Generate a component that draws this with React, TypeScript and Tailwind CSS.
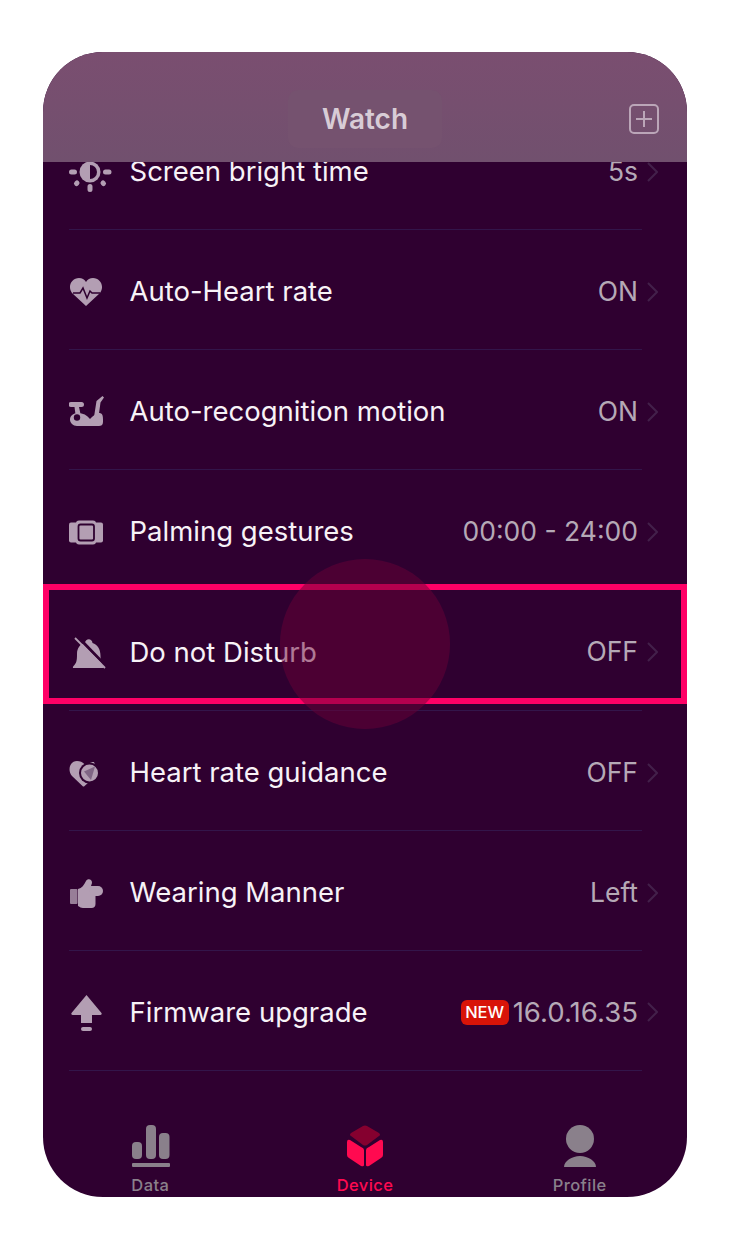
import React from 'react';

const ICON = '#b39eb3';
const BG = '#2f0030';

const SunIcon = () => (
  <svg viewBox="0 0 44 44" className="w-[44px] h-[44px]" fill={ICON}>
    <circle cx="21" cy="22" r="10.500" />
    <path d="M21 15a7 7 0 0 1 0 14z" fill={BG} />
    <g stroke={ICON} strokeWidth="5" strokeLinecap="round">
      <path d="M2.500 22h3M36.500 22h3.500M21 36.500v3M8 33l-.500.500M34 33l.500.500" />
    </g>
  </svg>
);

const HeartIcon = () => (
  <svg viewBox="0 0 44 44" className="w-[44px] h-[44px]" fill={ICON}>
    <path d="M17 36 3 23C-2 16 3 8 10 8c3 0 5.500 1.500 7 4 1.500-2.500 4-4 7-4 7 0 12 8 7 15z" />
    <path d="M4 23h7l3-5 4 10 3-7 2 2h8" fill="none" stroke={BG} strokeWidth="1.500" />
  </svg>
);

const BikeIcon = () => (
  <svg viewBox="0 0 44 44" className="w-[44px] h-[44px]" fill={ICON}>
    <path d="M2 12h10.500a2.500 2.500 0 0 1 0 5H10l1.500 7-5 .500-1-7.500H2a2.500 2.500 0 0 1 0-5z" />
    <path d="M25 27l2.500-16 6-5 1.500 1.500-3.500 5-2 14.500z" />
    <path d="M9 23c5 0 9 2 12 6 3-3 6-6 9-6 3 0 4 2 4 6v3c0 3-2 4-4 4H8c-4 0-7-3-7-6.500S4 23 9 23z" />
    <circle cx="8" cy="27.500" r="3.200" fill={BG} />
  </svg>
);

const PalmIcon = () => (
  <svg viewBox="0 0 44 44" className="w-[44px] h-[44px]" fill={ICON}>
    <rect x="0" y="12.500" width="34" height="20" rx="2" />
    <rect x="7" y="10.500" width="20" height="24" rx="3" />
    <rect x="9.500" y="14.500" width="15.500" height="16" rx="2" fill="none" stroke={BG} strokeWidth="1.800" />
  </svg>
);

const BellIcon = () => (
  <svg viewBox="0 0 44 44" className="w-[44px] h-[44px]" fill={ICON}>
    <path d="M4 38q-.500-1 .500-2c3-3 3.500-5 3.500-12 0-6 3-10 8-11 .500-5 7-5 7.500 0 5 1.500 8 6 8 13 0 5 1 8 2.500 10q1 1 .500 2z" />
    <path d="M8 6l30 31" stroke={BG} strokeWidth="3" />
    <path d="M6 8l30 30" stroke={ICON} strokeWidth="1.800" />
  </svg>
);

const GuideIcon = () => (
  <svg viewBox="0 0 44 44" className="w-[44px] h-[44px]" fill={ICON}>
    <path d="M14 35.500 3 25C-2 19 1 10 8 10c4 0 7 2 9 5 3-3 5-4 8-4l4 12-14 12.500z" />
    <circle cx="20.500" cy="22" r="10.500" fill={BG} />
    <circle cx="20.500" cy="22" r="8.500" />
    <path d="M26 15.500 15 20.500l7 8.500z" fill="#806585" />
  </svg>
);

const HandIcon = () => (
  <svg viewBox="0 0 44 44" className="w-[44px] h-[44px]" fill={ICON}>
    <rect x="1" y="18" width="7.500" height="15" rx="1" opacity="0.8" />
    <path d="M9 18c4-1 6-4 8-8 1.500-3 6.500-2 6 2l-1 3h7v10h-2.500v8c0 2.500-1.500 4-4 4H14c-2 0-3-1-5-2z" />
    <rect x="20" y="15" width="14" height="10" rx="5" />
  </svg>
);

const UpgradeIcon = () => (
  <svg viewBox="0 0 44 44" className="w-[44px] h-[44px]" fill={ICON}>
    <path d="M17.500 4 2.500 22c-.500 1 0 2 1 2h8.500v8h11v-8h8.500c1 0 1.500-1 1-2z" />
    <rect x="12" y="36" width="11" height="4" rx="2" />
  </svg>
);

const rows = [
  { label: 'Screen bright time', value: '5s', icon: <SunIcon />, height: 'h-[120px]', valueSize: 'text-[26.5px]' },
  { label: 'Auto-Heart rate', value: 'ON', icon: <HeartIcon />, height: 'h-[120px]', valueSize: 'text-[26.5px]' },
  { label: 'Auto-recognition motion', value: 'ON', icon: <BikeIcon />, height: 'h-[120px]', valueSize: 'text-[26.5px]' },
  { label: 'Palming gestures', value: '00:00 - 24:00', icon: <PalmIcon />, height: 'h-[120px]', valueSize: 'text-[26.5px]' },
  { label: 'Do not Disturb', value: 'OFF', icon: <BellIcon />, height: 'h-[121px]', valueSize: 'text-[26.5px]' },
  { label: 'Heart rate guidance', value: 'OFF', icon: <GuideIcon />, height: 'h-[120px]', valueSize: 'text-[26.5px]' },
  { label: 'Wearing Manner', value: 'Left', icon: <HandIcon />, height: 'h-[120px]', valueSize: 'text-[26.5px]' },
  { label: 'Firmware upgrade', value: '16.0.16.35', icon: <UpgradeIcon />, height: 'h-[120px]', valueSize: 'text-[27.6px]', isNew: true },
];

const Chevron = () => (
  <svg viewBox="0 0 11 20" className="w-[11px] h-[20px] ml-[9px]" fill="none" stroke="#43204a" strokeWidth="2">
    <path d="M1 1l9 9-9 9" />
  </svg>
);

export default function App() {
  return (
    <div className="w-[730px] h-[1247px] bg-white pt-[52px] px-[43px] font-['Inter',sans-serif]">
      <div className="relative w-[644px] h-[1145px] rounded-[60px] overflow-hidden bg-[#2f0030] flex flex-col">
        {/* list */}
        <div className="h-[1019px] pt-[58px] overflow-hidden flex-shrink-0">
          {rows.map((row) => (
            <div key={row.label} className={`${row.height} ml-[26px] w-[573px] pt-[4px] border-b border-[#33154a] flex items-center`}>
              <div className="w-[60.5px] flex-shrink-0">{row.icon}</div>
              <span className="text-[27.5px] mt-[1px] text-[#f7f2f7] whitespace-nowrap">{row.label}</span>
              <div className="ml-auto flex items-center -mr-[16px]">
                {row.isNew && (
                  <span className="mr-[4px] w-[48px] h-[25px] text-center rounded-[6px] bg-[#d81408] text-white text-[16.5px] leading-[25px] font-medium">NEW</span>
                )}
                <span className={`${row.valueSize} text-[#b5a9b6]`}>{row.value}</span>
                <Chevron />
              </div>
            </div>
          ))}
        </div>

        {/* tab bar */}
        <div className="flex-1 grid grid-cols-3">
          <div className="flex flex-col items-center pt-[54px]">
            <svg viewBox="0 0 40 42" className="w-[40px] h-[42px]" fill="#8a808b">
              <rect x="2" y="17" width="10" height="17" rx="4" />
              <rect x="16" y="0" width="10" height="34" rx="4" />
              <rect x="29" y="8" width="10.500" height="26" rx="4" />
              <rect x="2" y="38" width="38" height="4" rx="1" />
            </svg>
            <span className="text-[16.5px] font-medium text-[#8a808b] mt-[6px] tracking-wide">Data</span>
          </div>
          <div className="flex flex-col items-center pt-[54px]">
            <svg viewBox="0 0 40 42" className="w-[40px] h-[42px]">
              <path d="M18 1q2-1 4 0l12 7q2 2 0 3l-12 9q-2 1-4 0L6 11q-2-1 0-3z" fill="#85002f" />
              <path d="M2 17q0-3 3-2l11 7q3 1 3 3v15q0 2-3 1L4 33q-2-1-2-3z" fill="#ff0a50" />
              <path d="M38 17q0-3-3-2l-11 7q-3 1-3 3v15q0 2 3 1l12-8q2-1 2-3z" fill="#ff0a50" />
            </svg>
            <span className="text-[16.5px] font-medium text-[#ff0a50] mt-[6px] tracking-wide">Device</span>
          </div>
          <div className="flex flex-col items-center pt-[54px]">
            <svg viewBox="0 0 40 42" className="w-[40px] h-[42px]" fill="#8a808b">
              <circle cx="20" cy="14" r="14" />
              <path d="M4 42c0-6 8-11 16-11s16 5 16 11z" />
            </svg>
            <span className="text-[16.5px] font-medium text-[#8a808b] mt-[6px] tracking-wide">Profile</span>
          </div>
        </div>

        {/* nav bar sits over the scrolled list */}
        <div className="absolute top-0 left-0 right-0 h-[110px] bg-gradient-to-b from-[#7a4e70] to-[#71506e] flex items-end justify-center">
          <div className="mb-[14px] w-[154px] h-[58px] rounded-[10px] bg-[#75526f] flex items-center justify-center">
            <span className="text-[28px] font-semibold text-[#d8ccd6]">Watch</span>
          </div>
          <svg viewBox="0 0 30 30" className="absolute left-[586px] top-[52px] w-[30px] h-[30px]" fill="none" stroke="#bba6b8" strokeWidth="2">
            <rect x="1" y="1" width="28" height="28" rx="4" />
            <path d="M15 7v16M7 15h16" />
          </svg>
        </div>

        {/* tap highlight */}
        <div className="absolute left-0 right-0 top-[532px] h-[120px] border-[6px] border-[#ff0066]" />
        <div className="absolute left-[237px] top-[507px] w-[170px] h-[170px] rounded-full bg-[#6b0036]/50" />
      </div>
    </div>
  );
}
